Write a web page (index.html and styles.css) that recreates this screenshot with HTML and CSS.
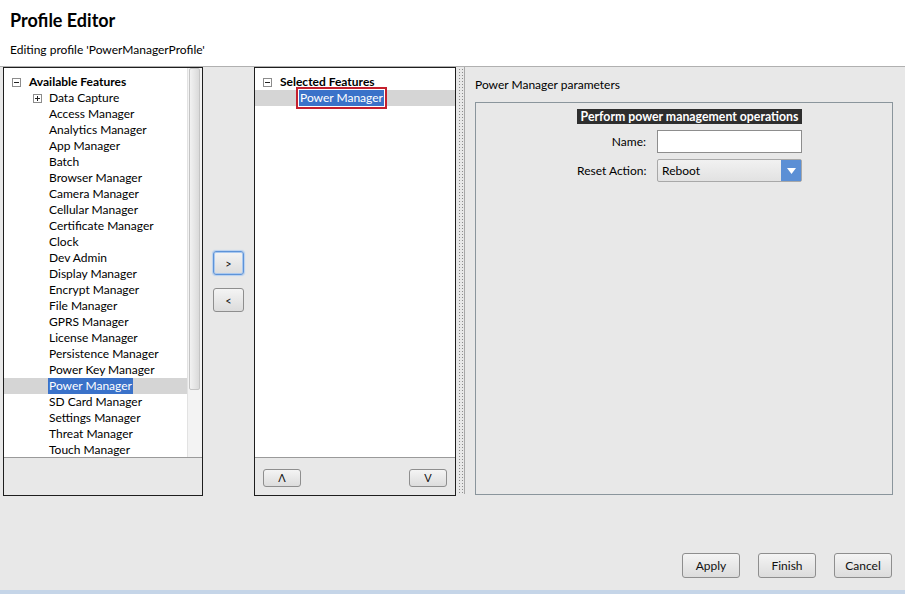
FILE: index.html
```html
<!DOCTYPE html>
<html lang="en">
<head>
    <meta charset="UTF-8">
    <title>Profile Editor</title>
    <link rel="stylesheet" href="styles.css">
</head>
<body>
    <div class="header">
        <h1>Profile Editor</h1>
        <div class="subtitle">Editing profile 'PowerManagerProfile'</div>
    </div>

    <div class="main">
        <div class="panel">
            <div class="list">
                <div class="tree">
                    <div class="row root">
                        <svg class="toggle" width="9" height="9" viewBox="0 0 9 9"><rect x="0.5" y="0.5" width="8" height="8" fill="#fff" stroke="#8c8c8c"/><path d="M2 4.5h5" stroke="#222"/></svg>
                        <span class="label">Available Features</span>
                    </div>
                    <div class="row child">
                        <svg class="toggle" width="9" height="9" viewBox="0 0 9 9"><rect x="0.5" y="0.5" width="8" height="8" fill="#fff" stroke="#8c8c8c"/><path d="M2 4.5h5M4.5 2v5" stroke="#222"/></svg>
                        <span class="label">Data Capture</span>
                    </div>
                    <div class="row item"><span class="label">Access Manager</span></div>
                    <div class="row item"><span class="label">Analytics Manager</span></div>
                    <div class="row item"><span class="label">App Manager</span></div>
                    <div class="row item"><span class="label">Batch</span></div>
                    <div class="row item"><span class="label">Browser Manager</span></div>
                    <div class="row item"><span class="label">Camera Manager</span></div>
                    <div class="row item"><span class="label">Cellular Manager</span></div>
                    <div class="row item"><span class="label">Certificate Manager</span></div>
                    <div class="row item"><span class="label">Clock</span></div>
                    <div class="row item"><span class="label">Dev Admin</span></div>
                    <div class="row item"><span class="label">Display Manager</span></div>
                    <div class="row item"><span class="label">Encrypt Manager</span></div>
                    <div class="row item"><span class="label">File Manager</span></div>
                    <div class="row item"><span class="label">GPRS Manager</span></div>
                    <div class="row item"><span class="label">License Manager</span></div>
                    <div class="row item"><span class="label">Persistence Manager</span></div>
                    <div class="row item"><span class="label">Power Key Manager</span></div>
                    <div class="row item selected"><span class="label">Power Manager</span></div>
                    <div class="row item"><span class="label">SD Card Manager</span></div>
                    <div class="row item"><span class="label">Settings Manager</span></div>
                    <div class="row item"><span class="label">Threat Manager</span></div>
                    <div class="row item"><span class="label">Touch Manager</span></div>
                </div>
                <div class="scrollbar"><div class="thumb"></div></div>
            </div>
        </div>

        <div class="move-buttons">
            <button class="btn small focused">&gt;</button>
            <button class="btn small">&lt;</button>
        </div>

        <div class="panel middle">
            <div class="list">
                <div class="tree">
                    <div class="row root">
                        <svg class="toggle" width="9" height="9" viewBox="0 0 9 9"><rect x="0.5" y="0.5" width="8" height="8" fill="#fff" stroke="#8c8c8c"/><path d="M2 4.5h5" stroke="#222"/></svg>
                        <span class="label">Selected Features</span>
                    </div>
                    <div class="row item selected"><span class="label focus">Power Manager</span></div>
                </div>
            </div>
            <div class="order-buttons">
                <button class="btn order">&#923;</button>
                <button class="btn order">V</button>
            </div>
        </div>

        <div class="splitter"></div>

        <div class="params">
            <div class="params-title">Power Manager parameters</div>
            <div class="params-box">
                <div class="form">
                    <div class="form-heading">Perform power management operations</div>
                    <label class="form-label">Name:</label>
                    <input class="text-input" type="text">
                    <label class="form-label">Reset Action:</label>
                    <div class="select">
                        <span>Reboot</span>
                        <span class="select-arrow"><svg width="9" height="6" viewBox="0 0 9 6"><path d="M0 0h9L4.5 6z" fill="#fff"/></svg></span>
                    </div>
                </div>
            </div>
        </div>
    </div>

    <div class="footer">
        <button class="btn action">Apply</button>
        <button class="btn action">Finish</button>
        <button class="btn action">Cancel</button>
    </div>
    <div class="status-strip"></div>
</body>
</html>
```

FILE: styles.css
```css
body {
    margin: 0;
    width: 905px;
    height: 594px;
    overflow: hidden;
    background: #e8e8e8;
    font-family: Lato, 'Open Sans', sans-serif;
    font-size: 12px;
    color: #000;
}

.header {
    background: #fff;
    height: 66px;
    border-bottom: 1px solid #b0b0b0;
    padding-left: 10px;
}

.header h1 {
    margin: 0;
    padding-top: 10px;
    font-size: 18px;
    line-height: 20px;
    font-weight: 700;
}

.subtitle {
    margin-top: 12px;
    line-height: 16px;
}

.main {
    display: flex;
    height: 429px;
}

.panel {
    margin-left: 3px;
    width: 200px;
    border: 1px solid #1e1e1e;
    box-sizing: border-box;
    display: flex;
    flex-direction: column;
}

.panel.middle {
    margin-left: 0;
    width: 202px;
}

.list {
    height: 390px;
    flex: none;
    background: #fff;
    border-bottom: 1px solid #9a9a9a;
    box-sizing: border-box;
    display: flex;
}

.tree {
    flex: 1;
    padding-top: 6px;
}

.row {
    height: 16px;
    line-height: 16px;
    display: flex;
    align-items: center;
    white-space: nowrap;
}

.row .toggle {
    flex: none;
}

.row.root {
    padding-left: 8px;
}

.row.root .label {
    margin-left: 8px;
    font-weight: 700;
}

.row.child {
    padding-left: 29px;
}

.row.child .label {
    margin-left: 7px;
}

.row.item {
    padding-left: 45px;
}

.row.selected {
    background: #d5d5d5;
}

.row.selected .label {
    background: #3a72c9;
    color: #fff;
    padding: 0 1px;
    margin-left: -1px;
}

.middle .row.selected .label.focus {
    box-shadow: 0 0 0 1px #fff, 0 0 0 3px #c4202e;
}

.scrollbar {
    width: 14px;
    flex: none;
    background: #f3f3f3;
    border-left: 1px solid #e2e2e2;
}

.thumb {
    height: 320px;
    margin: 0 2px 0 1px;
    border: 1px solid #c4c4c4;
    border-radius: 2px;
    background: linear-gradient(to right, #f2f2f2, #dadada);
}

.move-buttons {
    width: 51px;
    display: flex;
    flex-direction: column;
    justify-content: center;
    align-items: flex-start;
    gap: 13px;
    padding-left: 10px;
    box-sizing: border-box;
}

.btn {
    font-family: Lato, 'Open Sans', sans-serif;
    font-size: 12px;
    color: #111;
    border: 1px solid #8e8e8e;
    border-radius: 3px;
    background: linear-gradient(#f4f4f4, #dcdcdc);
    padding: 0;
    cursor: pointer;
}

.btn.small {
    width: 31px;
    height: 24px;
    font-size: 11px;
}

.btn.focused {
    border-color: #5d93d8;
    box-shadow: 0 0 0 1px #a9c8ef inset, 0 0 1px 1px #b6d0f0;
}

.order-buttons {
    display: flex;
    justify-content: space-between;
    padding: 11px 8px 0 8px;
}

.btn.order {
    width: 38px;
    height: 18px;
    font-size: 11px;
    line-height: 16px;
}

.splitter {
    width: 6px;
    margin-left: 2px;
    border-right: 1px solid #a8a8a8;
    background-image: radial-gradient(#8c8c8c 0.7px, transparent 1px);
    background-size: 3px 3px;
    background-position: 0 1px;
    margin-bottom: 2px;
}

.params {
    flex: 1;
    padding: 10px 12px 0 10px;
}

.params-title {
    line-height: 16px;
}

.params-box {
    margin-top: 9px;
    height: 393px;
    border: 1px solid #8a959c;
    box-sizing: border-box;
    padding: 6px 0 0 101px;
}

.form {
    display: grid;
    grid-template-columns: 69px 145px;
    column-gap: 11px;
    row-gap: 6px;
    align-items: center;
}

.form-heading {
    grid-column: 1 / 3;
    background: #2e2e2e;
    color: #fff;
    font-weight: 700;
    font-size: 12.3px;
    line-height: 15px;
    height: 15px;
    text-align: center;
    white-space: nowrap;
}

.form-label {
    text-align: right;
    white-space: nowrap;
}

.text-input {
    width: 145px;
    height: 23px;
    box-sizing: border-box;
    border: 1px solid #8d8d8d;
    background: #fff;
    margin: 0;
}

.select {
    height: 23px;
    box-sizing: border-box;
    border: 1px solid #a8a8a8;
    border-radius: 2px;
    background: linear-gradient(#f1f1f1, #e2e2e2);
    display: flex;
    align-items: center;
    padding-left: 4px;
}

.select span:first-child {
    flex: 1;
}

.select-arrow {
    width: 20px;
    height: 21px;
    background: #5b8fd5;
    display: flex;
    align-items: center;
    justify-content: center;
}

.footer {
    height: 94px;
    display: flex;
    justify-content: flex-end;
    align-items: flex-start;
    gap: 18px;
    padding: 57px 13px 0 0;
    box-sizing: border-box;
}

.btn.action {
    width: 58px;
    height: 25px;
}

.status-strip {
    height: 4px;
    background: #c5d5e8;
}
```
